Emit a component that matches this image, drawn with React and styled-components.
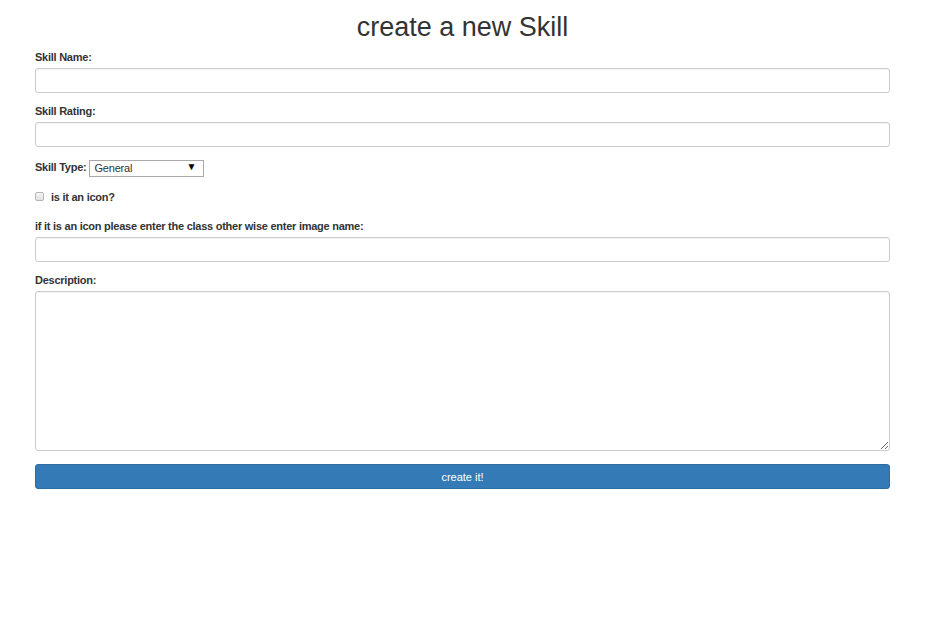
import styled, { createGlobalStyle } from "styled-components";

const GlobalStyle = createGlobalStyle`
  *, *::before, *::after {
    box-sizing: border-box;
  }

  body {
    margin: 0;
    background: #fff;
    color: #333;
    font-family: "Liberation Sans", Arial, sans-serif;
  }
`;

const Page = styled.div`
  margin: 0 37px 0 35px;
`;

const Title = styled.h1`
  margin: 12px 0 8px;
  font-size: 27px;
  font-weight: 400;
  line-height: 30px;
  text-align: center;
  color: #333;
`;

const Form = styled.form`
  display: flex;
  flex-direction: column;
`;

const Group = styled.div`
  display: flex;
  flex-direction: ${({ $inline }) => ($inline ? "row" : "column")};
  align-items: ${({ $inline }) => ($inline ? "center" : "stretch")};
  gap: 3px;
  margin-bottom: ${({ $gap }) => $gap ?? 11}px;
`;

const Label = styled.label`
  display: block;
  font-size: 11px;
  font-weight: 700;
  line-height: 15px;
  letter-spacing: -0.25px;
  color: #333;
`;

const TextInput = styled.input`
  width: 100%;
  height: 25px;
  padding: 3px 8px;
  border: 1px solid #ccc;
  border-radius: 3px;
  font-family: inherit;
  font-size: 11px;
  color: #555;
  background: #fff;
  box-shadow: inset 0 1px 1px rgba(0, 0, 0, 0.05);
`;

const TextArea = styled.textarea`
  width: 100%;
  height: 160px;
  padding: 4px 8px;
  border: 1px solid #ccc;
  border-radius: 3px;
  font-family: inherit;
  font-size: 11px;
  color: #555;
  box-shadow: inset 0 1px 1px rgba(0, 0, 0, 0.05);
`;

const SelectWrap = styled.span`
  position: relative;
  display: inline-block;
`;

const Select = styled.select`
  appearance: none;
  width: 115px;
  height: 17px;
  padding: 0 16px 0 4px;
  border: 1px solid #a9a9a9;
  border-radius: 0;
  background: #fff;
  font-family: inherit;
  font-size: 11px;
  line-height: 15px;
  letter-spacing: -0.2px;
  color: #333;
`;

const Arrow = styled.span`
  position: absolute;
  right: 8px;
  top: 2px;
  font-size: 10px;
  line-height: 13px;
  color: #000;
  pointer-events: none;
`;

const CheckRow = styled.label`
  display: flex;
  align-items: center;
  gap: 7px;
  height: 17px;
  margin: 0 0 14px;
  font-size: 11px;
  font-weight: 700;
  letter-spacing: -0.25px;
  color: #333;
`;

const Checkbox = styled.input`
  appearance: none;
  width: 9px;
  height: 9px;
  margin: 0;
  border: 1px solid #b5b5b5;
  border-radius: 2px;
  background: linear-gradient(#f4f4f4, #e2e2e2);
`;

const Button = styled.button`
  width: 100%;
  height: 25px;
  margin-top: 2px;
  border: 1px solid #2e6da4;
  border-radius: 3px;
  background: #337ab7;
  color: #fff;
  font-family: inherit;
  font-size: 11px;
  font-weight: 400;
  cursor: pointer;
`;

export default function App() {
  return (
    <>
      <GlobalStyle />
      <Page>
        <Title>create a new Skill</Title>
        <Form onSubmit={(e) => e.preventDefault()}>
          <Group>
            <Label htmlFor="skill-name">Skill Name:</Label>
            <TextInput id="skill-name" type="text" />
          </Group>
          <Group>
            <Label htmlFor="skill-rating">Skill Rating:</Label>
            <TextInput id="skill-rating" type="text" />
          </Group>
          <Group $inline>
            <Label htmlFor="skill-type">Skill Type:</Label>
            <SelectWrap>
              <Select id="skill-type" defaultValue="General">
                <option>General</option>
                <option>Frontend</option>
                <option>Backend</option>
              </Select>
              <Arrow>▼</Arrow>
            </SelectWrap>
          </Group>
          <CheckRow>
            <Checkbox type="checkbox" />
            is it an icon?
          </CheckRow>
          <Group>
            <Label htmlFor="skill-image">
              if it is an icon please enter the class other wise enter image name:
            </Label>
            <TextInput id="skill-image" type="text" />
          </Group>
          <Group>
            <Label htmlFor="skill-description">Description:</Label>
            <TextArea id="skill-description" />
          </Group>
          <Button type="submit">create it!</Button>
        </Form>
      </Page>
    </>
  );
}
